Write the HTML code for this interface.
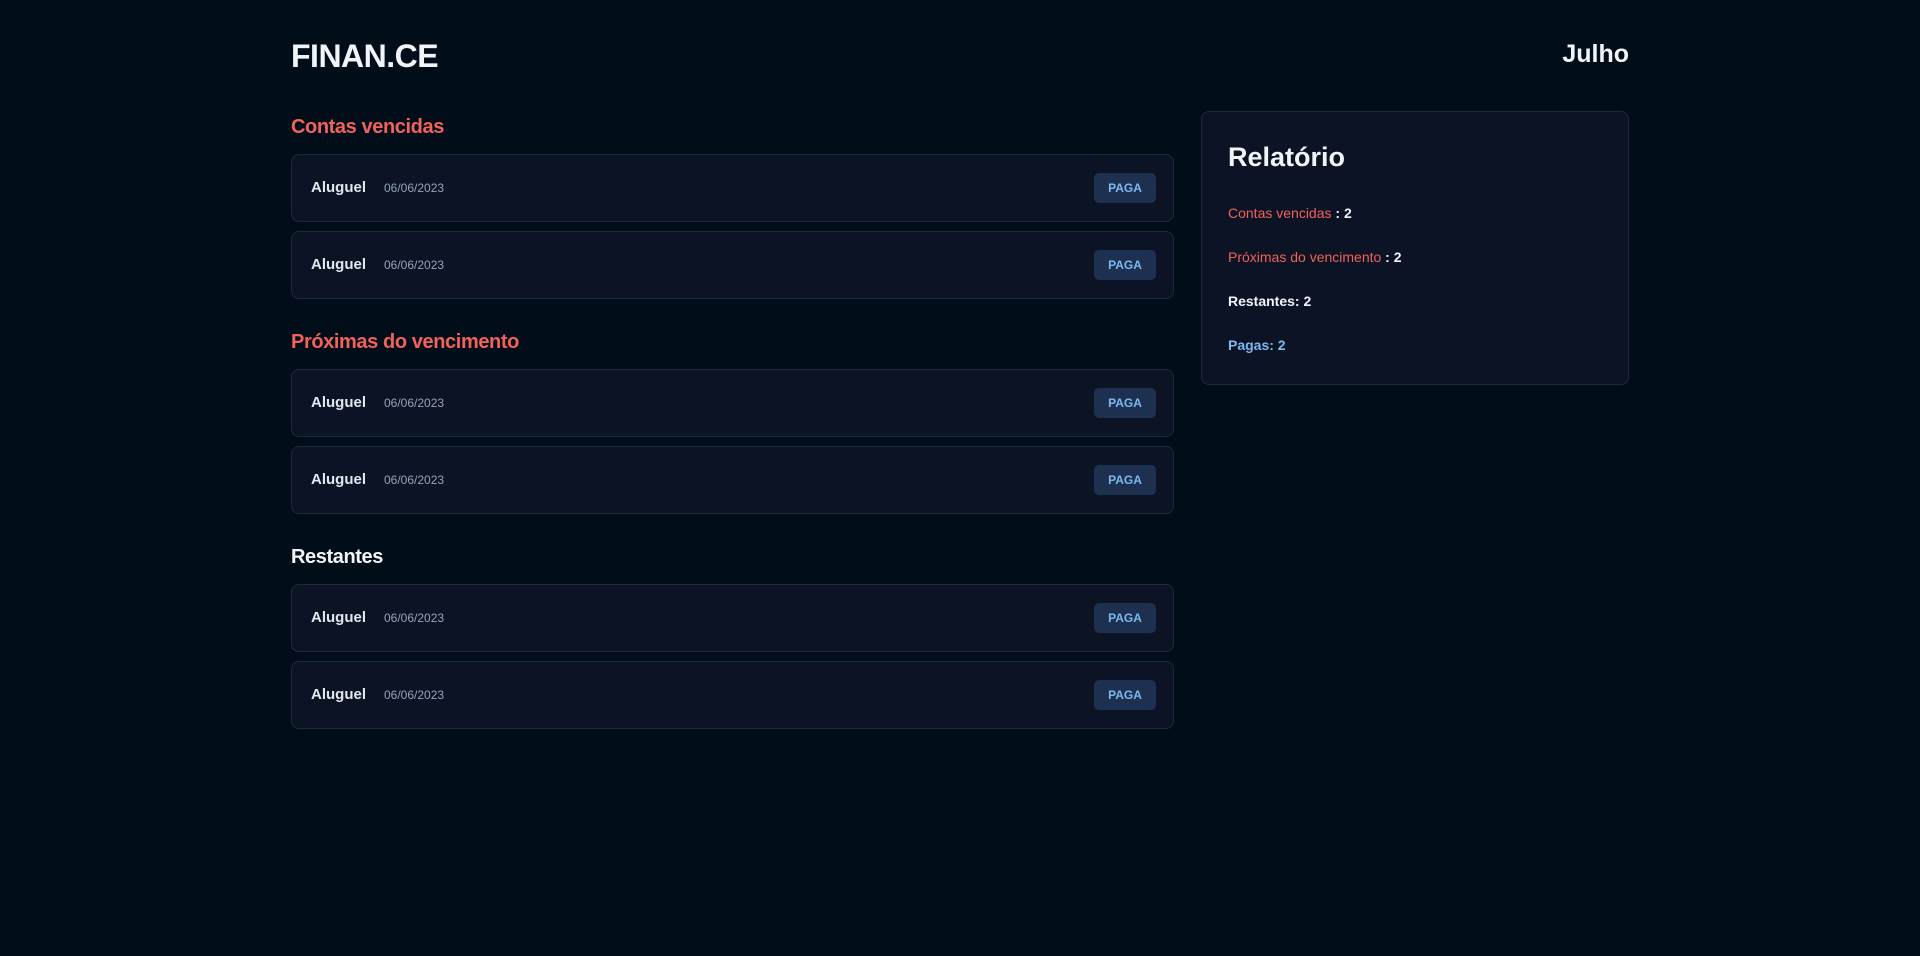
<!DOCTYPE html>
<html><head><meta charset="utf-8"><style>
*{box-sizing:border-box;margin:0;padding:0}
body{width:1920px;height:956px;background:#020d1a;font-family:"Liberation Sans",sans-serif;color:#f1f5f9;overflow:hidden;position:relative}
.abs{position:absolute}
.logo{left:291px;top:38px;font-size:32px;font-weight:bold;color:#f1f5f9;letter-spacing:-0.5px}
.mes{right:291px;top:40px;font-size:25px;font-weight:bold}
h2{position:absolute;left:291px;font-size:20px;font-weight:bold;letter-spacing:-0.4px}
.red{color:#f0625a}
.card{position:absolute;left:291px;width:883px;height:68px;background:#0b1324;border:1px solid #1e293b;border-radius:8px}
.card .n{position:absolute;left:19px;top:24px;font-size:15px;font-weight:bold;color:#e2e8f0}
.card .d{position:absolute;left:92px;top:26px;font-size:12px;color:#94a3b8}
.card .b{position:absolute;right:17px;top:18px;width:62px;height:30px;background:#1e3050;border-radius:5px;color:#7cb8f0;font-size:12px;font-weight:bold;text-align:center;line-height:30px}
.panel{left:1201px;top:111px;width:428px;height:274px;background:#0b1324;border:1px solid #1e293b;border-radius:8px}
.panel .t{position:absolute;left:26px;top:30px;font-size:27px;font-weight:bold}
.panel .l{position:absolute;left:26px;font-size:14px;font-weight:bold}
</style></head><body>
<div class="abs logo">FINAN.CE</div>
<div class="abs mes">Julho</div>
<h2 class="red" style="top:116px">Contas vencidas</h2>
<div class="card" style="top:154px"><span class="n">Aluguel</span><span class="d">06/06/2023</span><span class="b">PAGA</span></div>
<div class="card" style="top:231px"><span class="n">Aluguel</span><span class="d">06/06/2023</span><span class="b">PAGA</span></div>
<h2 class="red" style="top:331px">Próximas do vencimento</h2>
<div class="card" style="top:369px"><span class="n">Aluguel</span><span class="d">06/06/2023</span><span class="b">PAGA</span></div>
<div class="card" style="top:446px"><span class="n">Aluguel</span><span class="d">06/06/2023</span><span class="b">PAGA</span></div>
<h2 style="top:546px">Restantes</h2>
<div class="card" style="top:584px"><span class="n">Aluguel</span><span class="d">06/06/2023</span><span class="b">PAGA</span></div>
<div class="card" style="top:661px"><span class="n">Aluguel</span><span class="d">06/06/2023</span><span class="b">PAGA</span></div>
<div class="abs panel">
<div class="t">Relatório</div>
<div class="l" style="top:93px"><span class="red" style="font-weight:normal">Contas vencidas</span> : 2</div>
<div class="l" style="top:137px"><span class="red" style="font-weight:normal">Próximas do vencimento</span> : 2</div>
<div class="l" style="top:181px">Restantes: 2</div>
<div class="l" style="top:225px;color:#7cb8f0">Pagas: 2</div>
</div>
</body></html>
